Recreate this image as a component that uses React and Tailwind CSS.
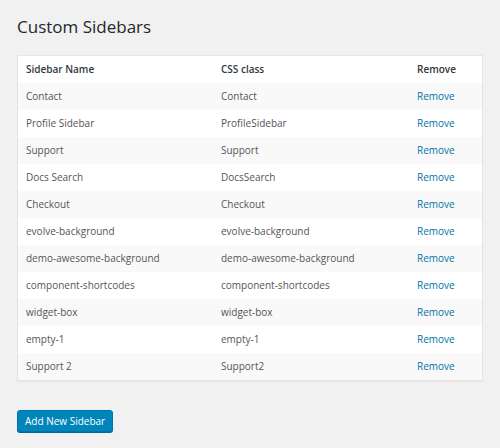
const rows = [
  ["Contact", "Contact"],
  ["Profile Sidebar", "ProfileSidebar"],
  ["Support", "Support"],
  ["Docs Search", "DocsSearch"],
  ["Checkout", "Checkout"],
  ["evolve-background", "evolve-background"],
  ["demo-awesome-background", "demo-awesome-background"],
  ["component-shortcodes", "component-shortcodes"],
  ["widget-box", "widget-box"],
  ["empty-1", "empty-1"],
  ["Support 2", "Support2"],
];

export default function App() {
  return (
    <div className="min-h-[448px] w-[500px] bg-[#f1f1f1] px-[17px] pt-[14px] font-['Open_Sans',sans-serif] text-[#555]">
      <h1 className="text-[17px] leading-[26px] text-[#23282d]">Custom Sidebars</h1>

      <div className="mt-[15px] w-[466px] border border-[#e5e5e5] bg-white shadow-[0_1px_1px_rgba(0,0,0,0.04)]">
        <div className="flex h-[27px] items-center text-[10px] font-semibold text-[#32373c]">
          <div className="w-[195px] pl-[8px]">Sidebar Name</div>
          <div className="w-[196px] pl-[8px]">CSS class</div>
          <div className="pl-[8px]">Remove</div>
        </div>
        {rows.map(([name, cls], i) => (
          <div
            key={name}
            className={`flex h-[27px] items-center text-[10px] ${i % 2 === 0 ? "bg-[#f9f9f9]" : "bg-white"}`}
          >
            <div className="w-[195px] pl-[8px]">{name}</div>
            <div className="w-[196px] pl-[8px]">{cls}</div>
            <div className="pl-[8px]">
              <a href="#" className="text-[#0073aa]">Remove</a>
            </div>
          </div>
        ))}
      </div>

      <button className="mt-[29px] h-[22px] rounded-[3px] border border-[#0073aa] bg-[#0085ba] px-[7px] text-[10px] leading-[20px] text-white shadow-[0_1px_0_#006799]">
        Add New Sidebar
      </button>
    </div>
  );
}
